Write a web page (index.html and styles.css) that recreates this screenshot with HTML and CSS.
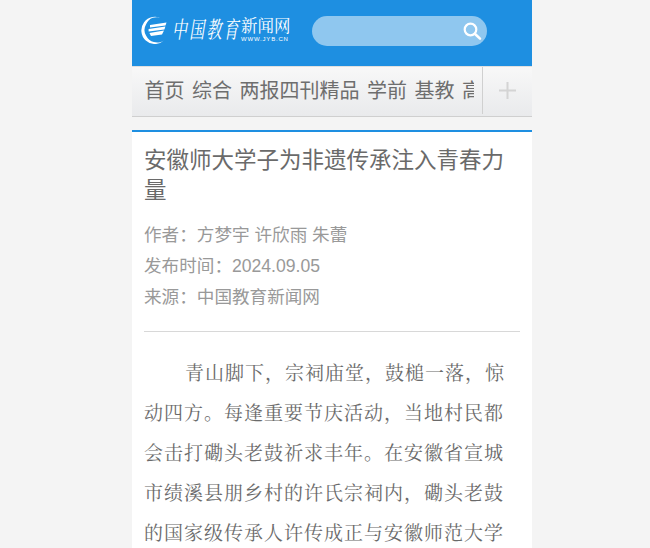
FILE: index.html
```html
<!DOCTYPE html>
<html lang="zh-CN">
<head>
<meta charset="utf-8">
<title>安徽师大学子为非遗传承注入青春力量</title>
<link rel="stylesheet" href="styles.css">
</head>
<body>
<div class="page">
  <header class="top">
    <a class="logo">
      <svg class="logo-mark" width="26" height="28" viewBox="0 0 26 28">
        <path d="M21 2.8A13.6 13.6 0 1 0 23 24.6A12.5 12.5 0 0 1 5 19.5A11 11 0 0 1 5 8.5A11 11 0 0 1 21 2.8Z" fill="#fff"/>
        <path d="M9 9L25.5 6.5L24.5 9.4L9 11.6ZM7.6 13L24.4 10.4L23.4 13.4L7.6 15.6ZM8.4 17L23 14.6L21 18.4L10 20Z" fill="#fff"/>
      </svg>
      <span class="logo-cal">中国教育</span>
      <span class="logo-side">
        <span class="logo-cn">新闻网</span>
        <span class="logo-en">WWW.JYB.CN</span>
      </span>
    </a>
    <div class="search">
      <svg width="20" height="20" viewBox="0 0 20 20">
        <circle cx="8.5" cy="8.5" r="5.8" fill="none" stroke="#fff" stroke-width="2.2"/>
        <path d="M12.8 12.8L18 17.6" stroke="#fff" stroke-width="2.6" stroke-linecap="round"/>
      </svg>
    </div>
  </header>
  <nav class="nav">
    <div class="nav-items">
      <a>首页</a><a>综合</a><a>两报四刊精品</a><a>学前</a><a>基教</a><a>高教</a>
    </div>
    <div class="nav-more">
      <svg width="17" height="17" viewBox="0 0 17 17"><path d="M8.5 0V17M0 8.5H17" stroke="#d4d4d4" stroke-width="2"/></svg>
    </div>
  </nav>
  <main class="article">
    <h1>安徽师大学子为非遗传承注入青春力量</h1>
    <div class="meta">
      <p>作者：方梦宇 许欣雨 朱蕾</p>
      <p>发布时间：2024.09.05</p>
      <p>来源：中国教育新闻网</p>
    </div>
    <div class="body">
      <p>青山脚下，宗祠庙堂，鼓槌一落，惊动四方。每逢重要节庆活动，当地村民都会击打磡头老鼓祈求丰年。在安徽省宣城市绩溪县朋乡村的许氏宗祠内，磡头老鼓的国家级传承人许传成正与安徽师范大学</p>
    </div>
  </main>
</div>
</body>
</html>
```
FILE: styles.css
```css
* { box-sizing: border-box; }
html, body { margin: 0; padding: 0; height: 100%; }
body {
  background: #f4f4f4;
  font-family: "Liberation Sans", "Noto Sans CJK SC", sans-serif;
  overflow: hidden;
}
.page {
  width: 400px;
  margin-left: 132px;
  background: #f4f4f4;
  height: 548px;
  overflow: hidden;
}
.top {
  height: 66px;
  background: #1e8fe1;
  display: flex;
  align-items: flex-start;
  padding: 16px 0 0 9px;
}
.logo {
  display: flex;
  align-items: flex-start;
  flex: none;
  width: 171px;
  color: #fff;
}
.logo-mark { flex: none; }
.logo-cal {
  flex: none;
  width: 74px;
  padding-left: 5px;
  font-family: "Noto Serif CJK SC", "Noto Sans CJK SC", serif;
  font-size: 15px;
  letter-spacing: 2.2px;
  line-height: 26px;
  white-space: nowrap;
  font-style: italic;
  transform: scaleY(1.55);
}
.logo-side {
  display: flex;
  flex-direction: column;
}
.logo-cn {
  font-family: "Noto Serif CJK SC", "Noto Sans CJK SC", serif;
  font-size: 16.5px;
  line-height: 19px;
  white-space: nowrap;
}
.logo-en {
  font-size: 6px;
  line-height: 8px;
  letter-spacing: 0.8px;
  white-space: nowrap;
}
.search {
  flex: none;
  width: 175px;
  height: 30px;
  border-radius: 15px;
  background: #8fc7ef;
  display: flex;
  justify-content: flex-end;
  align-items: center;
  padding-right: 5px;
}
.nav {
  height: 51px;
  display: flex;
  background: linear-gradient(#f8f8f8, #e9eaec);
  border-top: 1px solid #e0e0e0;
  border-bottom: 1px solid #cfcfcf;
}
.nav-items {
  width: 342px;
  flex: none;
  overflow: hidden;
  white-space: nowrap;
  display: flex;
  gap: 7.5px;
  padding-left: 12.5px;
  font-size: 20px;
  line-height: 48px;
  color: #6e6e6e;
}
.nav-items a { flex: none; }
.nav-more {
  margin-left: 8px;
  flex: 1;
  height: 47px;
  border-left: 1px solid #d0d0d0;
  display: flex;
  align-items: center;
  justify-content: center;
}
.article {
  margin-top: 13px;
  border-top: 2px solid #1e8fe1;
  background: #fff;
  padding: 14px 12px 0;
  height: 420px;
}
h1 {
  margin: 0;
  font-size: 22.5px;
  line-height: 30px;
  font-weight: 400;
  color: #6a6a6a;
}
.meta {
  margin-top: 14px;
  padding-bottom: 18px;
  border-bottom: 1px solid #d8d8d8;
  font-size: 17.6px;
  line-height: 31px;
  color: #999;
}
.meta p { margin: 0; }
.body {
  margin-top: 20px;
  font-family: "Noto Serif CJK SC", "Liberation Serif", "Noto Sans CJK SC", serif;
  font-size: 19px;
  letter-spacing: 1px;
  line-height: 40px;
  color: #6a6a6a;
}
.body p { margin: 0; text-indent: 41px; }
```
